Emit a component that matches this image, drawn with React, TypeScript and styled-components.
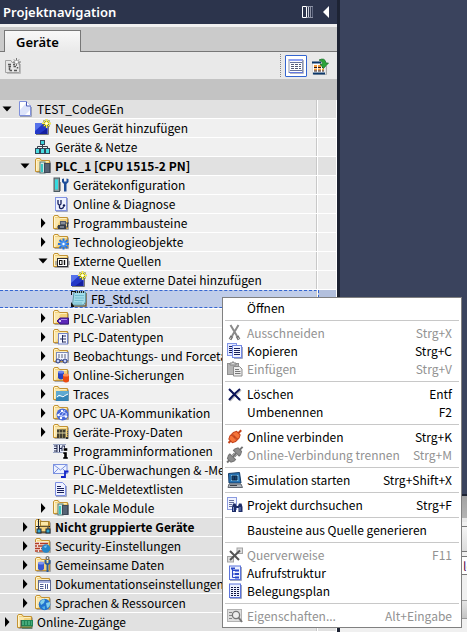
import React from "react";
import styled, { createGlobalStyle, css } from "styled-components";

const GlobalStyle = createGlobalStyle`
  *, *::before, *::after { box-sizing: border-box; }
  html, body { margin: 0; height: 100%; }
  body {
    overflow: hidden;
    font-family: "Noto Sans CJK SC", "Noto Sans", sans-serif;
    font-size: 12px;
    line-height: 18px;
    color: #000;
  }
  button { font: inherit; color: inherit; }
`;

/* ---------- icons ---------- */

const Svg = styled.svg`
  display: block;
  flex: none;
  width: 16px;
  height: 16px;
  overflow: visible;
`;

const Icon = ({ children }: { children: React.ReactNode }) => (
  <Svg viewBox="0 0 16 16" aria-hidden="true">
    {children}
  </Svg>
);

const Folder = ({ children }: { children?: React.ReactNode }) => (
  <Icon>
    <path d="M1.5 14.5H15.5V3.5" fill="none" stroke="#a5a5a5" />
    <path d="M.5 13.5V1.5L1.5 .5H5L6.5 2.5H14.5V13.5Z" fill="#f3d27c" stroke="#c39233" />
    <path d="M1 13V3L8 3L3 13Z" fill="#fae7ae" />
    <path d="M1.5 12.5V2L2 1.5H4.5" fill="none" stroke="#fff5cf" />
    <path d="M7 3.5H13.5" stroke="#fdf0bd" />
    {children}
  </Icon>
);

const PageIcon = () => (
  <Icon>
    <path d="M3 15.5H14.5V6" fill="none" stroke="#9aa0b4" />
    <path d="M2.5 .5H9L13.5 5V14.5H2.5Z" fill="#fff" stroke="#7f90dc" />
    <path d="M3 14V9L9 2H10V5.5H13V9L8 14Z" fill="#dde4fa" />
    <path d="M9.5 .5V5H13.5" fill="#fff" stroke="#4858b8" />
  </Icon>
);

const Sparkle = () => (
  <g>
    <path d="M11.5 -1V8M7 3.500H16M8.500 .5L14.500 6.500M14.500 .5L8.500 6.500" stroke="#8a8a1c" strokeWidth="1.6" />
    <path d="M11.5 -1V8M7 3.500H16M9 1L14 6M14 1L9 6" stroke="#fcf23c" />
    <circle cx="11.500" cy="3.500" r="1.300" fill="#fff" />
  </g>
);

const NewIcon = () => (
  <Icon>
    <path d="M1 14.500H13.500V4" stroke="#777" fill="none" />
    <rect x="0" y="3" width="12.500" height="11" fill="#2338c8" />
    <path d="M0 3H9L0 11Z" fill="#5672ea" />
    <path d="M12.500 8V14H4Z" fill="#1520a0" />
    <Sparkle />
  </Icon>
);

const NetworkIcon = () => (
  <Icon>
    <path d="M7.500 5V8M2.500 11V7.500H12.500V11M7.500 7V11" stroke="#333c48" fill="none" />
    <rect x="5.500" y="1.500" width="4" height="4" fill="#3fd0d8" stroke="#314456" />
    {[1, 6, 11].map((x) => (
      <rect key={x} x={x - 0.5} y="9.500" width="4" height="5" fill="#4adbe0" stroke="#314456" />
    ))}
  </Icon>
);

const RackFolder = () => (
  <Folder>
    <rect x="5" y="4" width="5" height="11" fill="#cfe6e4" stroke="#547a78" strokeWidth="1" />
    <rect x="6" y="6" width="2" height="8" fill="#39c7c2" />
    <rect x="9" y="5" width="6.500" height="10" fill="#3f4958" />
    <rect x="10" y="6" width="4" height="8" fill="#566374" />
  </Folder>
);

const DeviceConfigIcon = () => (
  <Icon>
    <rect x="1" y="1" width="5.500" height="13.500" fill="#8f999b" stroke="#4a5a60" />
    <rect x="2" y="2.500" width="3" height="10" fill="#35dbe0" />
    <path d="M9 2V5L11 7V14.500H13.500V7L15.500 5V2L13.500 1.500V4.500H11V1.500Z" fill="#1d4d98" />
    <path d="M7.500 5V14" stroke="#9a9a9a" />
  </Icon>
);

const DiagnoseIcon = () => (
  <Icon>
    <path d="M3 15.500H14.500V2" stroke="#a0a7c0" fill="none" />
    <rect x="2.500" y="1.500" width="11" height="13" fill="#eef2ff" stroke="#8394e2" />
    <path d="M5 4V7.500Q5 9 6.500 9Q8 9 8 7.500V4M6.500 9V11.500Q7 13 9 12.500Q10.500 12 10.500 10.500" fill="none" stroke="#101a58" strokeWidth="1.300" />
    <circle cx="11" cy="9.500" r="1.200" fill="#101a58" />
  </Icon>
);

const BlocksFolder = () => (
  <Folder>
    <rect x="7" y="6" width="6" height="4" fill="#535b68" />
    <rect x="5" y="10" width="8" height="4" fill="#353d4a" />
    <path d="M4 12H6M13 8H16M13 12H14.500V8" stroke="#353d4a" fill="none" />
    <path d="M8 8H12M7 12H11" stroke="#b7bfca" />
  </Folder>
);

const GearFolder = () => (
  <Folder>
    <path d="M10.500 4.500V15.500M5 10H16M6.500 6L14.500 14M14.500 6L6.500 14" stroke="#2874e0" strokeWidth="2" />
    <circle cx="10.500" cy="10" r="3" fill="#4a93f0" />
    <circle cx="10.500" cy="10" r="1.200" fill="#fff" />
  </Folder>
);

const SourceFolder = () => (
  <Folder>
    <rect x="4.500" y="5.500" width="10" height="8" fill="#fff" stroke="#2c2c34" />
    <path d="M3 8V12M16 8V12" stroke="#70757d" />
    <rect x="6.500" y="7.500" width="2.500" height="4" fill="none" stroke="#111" />
    <path d="M11.500 7V12" stroke="#111" strokeWidth="1.400" />
  </Folder>
);

const ScriptIcon = () => (
  <Icon>
    <path d="M2 15H15V2" stroke="#74623e" fill="none" strokeWidth="1.500" />
    <path d="M3 1H14.500V11L12.500 14H1.500Z" fill="#a2dce9" stroke="#5e9aa8" />
    <path d="M4 4.500H13M4 7H13M3.500 9.500H12.500M3 12H11" stroke="#72bdd0" />
    <path d="M4 1H14" stroke="#222" strokeDasharray="1 1" strokeWidth="2" />
    <path d="M0 16V11L3 15V16ZM0 0H4V1H1V4H0Z" fill="#111" />
  </Icon>
);

const TagsFolder = () => (
  <Folder>
    <path d="M4 11L7 8H15.500V14H7Z" fill="#5b27b8" stroke="#3a1681" />
    <path d="M8 9.500H14" stroke="#a98af0" />
    <circle cx="7" cy="11" r="1" fill="#fff" />
  </Folder>
);

const TypesFolder = () => (
  <Folder>
    <rect x="5.500" y="4.500" width="9" height="10.500" fill="#f4f6ff" stroke="#7484c8" />
    <path d="M9.500 6V13.500M7 10H9.500M9.500 7H13M9.500 10H13M9.500 13H13" stroke="#222a5c" fill="none" />
  </Folder>
);

const WatchFolder = () => (
  <Folder>
    <rect x="3.500" y="4.500" width="11.500" height="8" fill="#f5f7ff" stroke="#7c89b8" />
    <path d="M5 7H14M5 9H14" stroke="#5a637c" strokeDasharray="2 1" />
    <circle cx="5" cy="13" r="2" fill="#c5d1f8" stroke="#26367c" />
    <circle cx="12" cy="13" r="2" fill="#c5d1f8" stroke="#26367c" />
    <path d="M7 12.500Q8.500 11 10 12.500" stroke="#26367c" fill="none" />
  </Folder>
);

const Drum = ({ x, y, fill, light }: { x: number; y: number; fill: string; light: string }) => (
  <g>
    <path d={`M${x} ${y}V${y + 6}Q${x + 3} ${y + 9} ${x + 6} ${y + 6}V${y}Z`} fill={fill} />
    <ellipse cx={x + 3} cy={y} rx="3" ry="1.500" fill={light} />
  </g>
);

const BackupFolder = () => (
  <Folder>
    <Drum x={5} y={5} fill="#2742c0" light="#6f87ee" />
    <Drum x={10} y={8} fill="#ec4b10" light="#ff9257" />
  </Folder>
);

const TraceFolder = () => (
  <Folder>
    <rect x="3" y="5" width="12.500" height="10" fill="#3484b5" />
    <path d="M3 5H15.500V8L3 12Z" fill="#5fa9d0" />
    <path d="M4 11Q6 8 8 10T12 9.500L15 8" fill="none" stroke="#fff" />
  </Folder>
);

const OpcFolder = () => (
  <Folder>
    <circle cx="9.500" cy="9.500" r="6" fill="#4667d8" />
    <path d="M5 10L9 6M7 13L12 5M5 10L13 12M9 6L14 9M7 13L14 9" stroke="#b9c8ff" />
    <g fill="#fff">
      <circle cx="5.500" cy="10" r="1.200" />
      <circle cx="9" cy="6" r="1.200" />
      <circle cx="13" cy="11.500" r="1.200" />
      <circle cx="8" cy="13" r="1.200" />
    </g>
  </Folder>
);

const ProxyFolder = () => (
  <Folder>
    <path d="M4 14V5H13V14" fill="#8c8258" />
    <path d="M5 6V14M8 6V14M11 6V14" stroke="#2f2d28" strokeWidth="1.600" />
    <path d="M4 9H13" stroke="#ddd4a8" />
    <path d="M14.500 7V13" stroke="#555" strokeDasharray="1 1" />
    <rect x="13" y="13" width="2" height="2" fill="#333" />
  </Folder>
);

const ProgInfoIcon = () => (
  <Icon>
    <path d="M0 1.500H13M0 9.500H10" stroke="#98a3c0" />
    <rect x="0" y="2" width="12" height="7" fill="#e7ecfa" />
    <path d="M1 3H4M1 5.500H4M1 8H4M4 2V9M6.500 2V9M6 5.500H9M9 3.500V8M9 3H12M11.500 3V8" stroke="#1e2448" fill="none" />
    <path d="M10.500 5H14.500V8H10.500ZM10 9H14V14H15V16H10V14H11V11H10Z" fill="#000" stroke="#fff" strokeWidth=".4" />
  </Icon>
);

const MailIcon = () => (
  <Icon>
    <rect x=".5" y="2.500" width="13.500" height="9" fill="#edf2ff" stroke="#7b91e0" />
    <path d="M.5 2.500L7.500 8L14 2.500M.5 11.500L5 7M14 11.500L10 7" fill="none" stroke="#7b91e0" />
    <path d="M8 15H12V9.500H15.500" fill="none" stroke="#1425c8" strokeWidth="1.800" />
  </Icon>
);

const TextListIcon = () => (
  <Icon>
    <path d="M3 15.500H13.500V5" stroke="#a0a7c0" fill="none" />
    <path d="M2.500 1.500H9.500L12.500 4.500V14.500H2.500Z" fill="#eef1ff" stroke="#7b8de0" />
    <path d="M4 5.500H8M4 7.500H11M4 9.500H11M4 11.500H11" stroke="#18205c" />
  </Icon>
);

const UngroupedFolder = () => (
  <Folder>
    <path d="M3.500 0V13M1 7.500H15" stroke="#1d2532" />
    <rect x="5.500" y="2.500" width="8" height="4.500" fill="#fbe9a8" stroke="#a8842e" />
    <rect x="2" y="10" width="4" height="4" fill="#34a8d0" stroke="#1d2532" />
    <rect x="11" y="10" width="4" height="4" fill="#34a8d0" stroke="#1d2532" />
    <path d="M4 8V10M13 8V10M6 13H11" stroke="#1d2532" />
  </Folder>
);

const SecurityFolder = () => (
  <Folder>
    <rect x="0" y="4" width="13" height="10" fill="#f3e4dc" />
    <path d="M0 5.500H4M5 5.500H13M0 8H2M3 8H9M10 8H13M0 10.500H5M6 10.500H13M0 13H3M4 13H9" stroke="#b23b25" strokeWidth="1.700" />
    <circle cx="11" cy="10.500" r="4.300" fill="#2585c8" />
    <path d="M8.500 9Q10 7 12 7.500L11 10Z" fill="#7cc4ee" />
  </Folder>
);

const SharedFolder = () => (
  <Folder>
    <Drum x={3} y={6} fill="#3a58d0" light="#8196f0" />
    <path d="M12.500 6.500V15M10.500 3V6L12.500 7.500L14.500 6V3" stroke="#2a5c9a" fill="none" strokeWidth="2" />
    <circle cx="12.500" cy="1" r="1.500" fill="none" stroke="#555" />
  </Folder>
);

const DocsFolder = () => (
  <Folder>
    <rect x="3.500" y="4.500" width="12" height="10" fill="#fff" stroke="#5e6890" />
    <path d="M4 6H15" stroke="#8a96d0" strokeWidth="1.500" />
    <path d="M5 8.500H8.500M5 10.500H8.500M5 12.500H8.500M10.500 8V13M12.500 8V13" stroke="#4d5b90" />
  </Folder>
);

const GlobeFolder = () => (
  <Folder>
    <circle cx="9.500" cy="9.500" r="5.800" fill="#2173cf" />
    <path d="M5 7Q8 3 10 5L9 8L6 10ZM11 8L15 7Q15.500 12 12 13Z" fill="#84cfe8" />
    <path d="M7 12L10 11L10 14.500Q8 14.500 7 12" fill="#52aee0" />
  </Folder>
);

const AccessFolder = () => (
  <Folder>
    <rect x="4" y="6" width="12" height="6.500" fill="#1f8455" />
    <path d="M5 8H15M5 10H15" stroke="#6ad0a0" strokeDasharray="2 1" />
    <path d="M6 12.500V15M8 12.500V15M10 12.500V15M12 12.500V15M14 12.500V15" stroke="#1b5c3e" />
    <path d="M4 14V6" stroke="#444" />
  </Folder>
);

const CutIcon = () => (
  <Icon>
    <path d="M3.500 0L10 11M11.500 0L5 11" stroke="#8a8a8a" strokeWidth="2" />
    <path d="M5 11L3 14.500M10 11L12 14.500" stroke="#6f6f6f" strokeWidth="3" />
    <path d="M4 12.500L3 14M11 12.500L12 14" stroke="#ddd" />
  </Icon>
);

const CopyIcon = () => (
  <Icon>
    <rect x=".5" y=".5" width="9" height="12" fill="#e3e9ff" stroke="#8195e8" />
    <path d="M2 3.500H6M2 5.500H6M2 7.500H6M2 9.500H6" stroke="#18205c" />
    <path d="M7 15.500H15.500V4" stroke="#a0a7c0" fill="none" />
    <rect x="5.500" y="2.500" width="9" height="12" fill="#f2f5ff" stroke="#7388e4" />
    <path d="M7 5.500H13M7 7.500H13M7 9.500H13M7 11.500H13" stroke="#18205c" />
  </Icon>
);

const PasteIcon = () => (
  <Icon>
    <rect x=".5" y="2.500" width="11" height="11" fill="#b5b5b5" stroke="#919191" />
    <path d="M3 4V2H5L6 .5L7 2H9V4Z" fill="#d8d8d8" stroke="#858585" />
    <path d="M6.500 5.500H12.500L15 8V15H6.500Z" fill="#ececec" stroke="#8c8c8c" />
    <path d="M8 8.500H12M8 10.500H13.500M8 12.500H13.500" stroke="#777" />
  </Icon>
);

const DeleteIcon = () => (
  <Icon>
    <path d="M3 4L14 15M14 4L3 15" stroke="#bbb" strokeWidth="1.500" />
    <path d="M2 3Q5 6 13 14M13 3Q8 7 2 14" stroke="#0b1458" strokeWidth="2" fill="none" />
  </Icon>
);

const Plug = ({ a, b, gap }: { a: string; b: string; gap: number }) => (
  <Icon>
    <g transform="rotate(-45 7.500 8)">
      <path d={`M${-1 - gap} 8H${17 + gap}`} stroke={b} strokeWidth="2" />
      <path d={`M${7 - gap} 4H${5 - gap}L${2 - gap} 5.500V10.500L${5 - gap} 12H${7 - gap}Z`} fill={a} stroke={b} />
      <path d={`M${8 + gap} 4H${10 + gap}L${13 + gap} 5.500V10.500L${10 + gap} 12H${8 + gap}Z`} fill={a} stroke={b} />
      {gap > 0 && <path d="M6 6.500H9M6 9.500H9" stroke={b} />}
    </g>
  </Icon>
);

const SimIcon = () => (
  <Icon>
    <path d="M2 11L1.500 1.500L12.500 .5L14 11Z" fill="#2773b4" stroke="#173c66" />
    <rect x="4" y="3" width="7.500" height="6" fill="#7ab9e0" />
    <path d="M5 4H10V8H5ZM7.500 4V8" fill="#18406c" stroke="#0d2848" />
    <path d="M2 12H14L15.500 15.500H1Z" fill="#b0b4ba" stroke="#62676f" />
    <path d="M3 13.500H10" stroke="#3a3f48" />
  </Icon>
);

const Binoculars = () => (
  <Icon>
    <rect x=".5" y=".5" width="9" height="12" fill="#f0f3ff" stroke="#8b9be0" />
    <path d="M2 3.500H7M2 5.500H7M2 7.500H5M2 9.500H5" stroke="#67709c" />
    <path d="M6 6.500H8.500L9.500 9H11L12 6.500H14.500L15.500 10V15H11.500V11H9V15H5V10Z" fill="#1e2d68" />
    <path d="M6.500 10V14M13 10V14" stroke="#7f92cc" />
  </Icon>
);

const XrefIcon = () => (
  <Icon>
    <rect x="10" y="1" width="5.500" height="5.500" fill="#ddd" stroke="#a3a3a3" />
    <rect x=".5" y="9.500" width="6" height="5.500" fill="#ddd" stroke="#a3a3a3" />
    <path d="M3 4L12 13M13 3.500L3 13" stroke="#555" strokeWidth="2" />
  </Icon>
);

const CallIcon = () => (
  <Icon>
    <path d="M3 15.500H14.500V2" stroke="#a0a7c0" fill="none" />
    <rect x="2.500" y="1" width="11" height="13.500" fill="#edf1ff" stroke="#5c74dc" />
    <path d="M5.500 3V12.500H8M5.500 5.500H8M5.500 9H8" stroke="#2846c8" fill="none" />
    <path d="M8 5.500H12M8 9H12M8 12.500H12M4 3.500H8" stroke="#2846c8" strokeWidth="1.800" />
  </Icon>
);

const PlanIcon = () => (
  <Icon>
    <path d="M3 15.500H14.500V2" stroke="#a0a7c0" fill="none" />
    <rect x="2.500" y="1" width="11" height="13.500" fill="#edf1ff" stroke="#5c74dc" />
    <path d="M4 4.500H12M4 6.500H12M4 8.500H12M4 10.500H12M4 12.500H12" stroke="#111742" strokeDasharray="2 1" />
  </Icon>
);

const PropsIcon = () => (
  <Icon>
    <rect x=".5" y="1.500" width="14" height="12" fill="#dedede" stroke="#b2b2b2" />
    <path d="M2 4.500H5M2 7.500H5M2 10.500H5" stroke="#858585" />
    <circle cx="9" cy="7" r="3.600" fill="#eee" stroke="#777" strokeWidth="1.300" />
    <path d="M11.500 9.500L15 14" stroke="#777" strokeWidth="2" />
  </Icon>
);

const ToolNewIcon = () => (
  <Icon>
    <path d="M2 15.500H15.500V6" stroke="#bbb" fill="none" />
    <path d="M.5 14.500V2.500H6L7 4.500H14.500V14.500Z" fill="#e6e6e6" stroke="#a2a2a2" />
    <path d="M3 6.500H6M8 6.500H10M4.500 9.500V12M3.500 8.500H6M4.500 12.500H7M8.500 8.500H11M9 12.500H12M12.500 9V10.500" stroke="#555" strokeWidth="1.500" fill="none" />
    <path d="M11.500 0V8M8 4H16M9 1.500L14 6.500M14 1.500L9 6.500" stroke="#777" />
    <circle cx="11.500" cy="4" r="1.500" fill="#fff" />
  </Icon>
);

const ListViewIcon = () => (
  <Icon>
    <path d="M2 15.500H15.500V2" stroke="#b4b8c8" fill="none" />
    <rect x="1" y="1.500" width="13.500" height="13" fill="#fff" stroke="#8d96ae" />
    <path d="M1 2H14.500" stroke="#8fa2f2" strokeWidth="2" />
    <path d="M2 4.500H14M2 12.500H14" stroke="#68739a" />
    <path d="M3 6.500H13M3 8.500H13M3 10.500H13" stroke="#545c78" strokeDasharray="3 1" />
    <path d="M1 14.500H15" stroke="#6378e0" />
  </Icon>
);

const ExportIcon = () => (
  <Icon>
    <path d="M2 16.500H14.500V8" stroke="#aaa" fill="none" />
    <rect x=".5" y="4" width="12.500" height="12" fill="#fff" stroke="#d7d7d7" />
    <path d="M0 4.500H9M1 15.500H13" stroke="#0b3668" strokeWidth="2" />
    <path d="M2 8H5M6 8H9M10 8H12M2 11.500H5M6 11.500H9M10 11.500H12" stroke="#f29a38" strokeWidth="2" />
    <path d="M2 9.500H5M6 9.500H9M10 9.500H12M2 13H5M6 13H9M10 13H12" stroke="#301818" />
    <path d="M7 2Q13 -1 14 5H16.500L11.500 10.500L8 6H10.500Q10.500 3 7 2Z" fill="#2ca438" stroke="#176c28" strokeWidth=".7" />
  </Icon>
);

/* ---------- layout ---------- */

const Shell = styled.div`
  position: relative;
  display: flex;
  min-height: 100vh;
  height: 100%;
  overflow: hidden;
  background: #3a435d;
`;

const Panel = styled.aside`
  flex: none;
  width: 340px;
  border-right: 3px solid #1d2333;
  background: #f0f0f0;
`;

const TitleBar = styled.header`
  display: flex;
  align-items: center;
  gap: 10px;
  height: 24px;
  padding: 0 8px 0 3px;
  background: #2c344c;
  color: #fff;
`;

const Title = styled.h1`
  flex: 1;
  margin: 0;
  font-family: "Noto Sans", sans-serif;
  font-size: 13px;
  line-height: 24px;
  font-weight: 600;
`;

const PlainButton = styled.button`
  display: flex;
  padding: 0;
  border: 0;
  background: none;
`;

const Glyph = styled.svg<{ $w: number }>`
  display: block;
  width: ${(p) => p.$w}px;
  height: 12px;
`;

const TabStrip = styled.div`
  display: flex;
  align-items: flex-end;
  height: 28px;
  border-top: 3px solid #f0f0f0;
  background: #cbcbcb;
  box-shadow: inset 0 -1px #777;
  padding-left: 4px;
`;

const Tab = styled.button`
  height: 22px;
  min-width: 77px;
  padding: 0 20px 0 11px;
  border: 1px solid #777;
  border-bottom: 0;
  background: linear-gradient(#f8f8f8, #e9e9e9);
  font-family: "Noto Sans", sans-serif;
  font-weight: 600;
  font-size: 13px;
  line-height: 18px;
  text-align: left;
`;

const Toolbar = styled.div`
  display: flex;
  align-items: center;
  height: 27px;
  padding: 0 9px 0 5px;
  background: #e9e9e9;
`;

const Spacer = styled.div`
  flex: 1;
`;

const Grip = styled.div`
  height: 23px;
  margin-right: 4px;
  border-left: 1px dotted #888;
`;

const ToolButton = styled.button<{ $active?: boolean }>`
  display: grid;
  place-items: center;
  width: ${(p) => (p.$active ? 22 : 16)}px;
  height: 22px;
  margin-right: ${(p) => (p.$active ? 5 : 0)}px;
  padding: 0;
  border: ${(p) => (p.$active ? "1px solid #3465d0" : "0")};
  border-radius: 1px;
  background: ${(p) => (p.$active ? "#fff" : "none")};
`;

const TreeHeader = styled.div`
  height: 21px;
  background: #c3c3c3;
`;

const Tree = styled.ul`
  margin: 0;
  padding: 0;
  list-style: none;
`;

const Row = styled.li<{ $dark?: boolean; $selected?: boolean }>`
  display: grid;
  grid-template-columns: minmax(0, 1fr) 18px;
  column-gap: 1px;
  height: 19px;
  padding-right: 1px;
  border-bottom: 1px solid #fff;
  background: #fff;
  > * {
    background: ${(p) => (p.$dark ? "#e1e1e1" : "#f0f0f0")};
  }
  ${(p) =>
    p.$selected &&
    css`
      > :first-child {
        background: #c0cde9;
        border-top: 1px dashed #3465d0;
        border-bottom: 1px dashed #3465d0;
      }
      > :last-child {
        background: #b3c0dd;
        border-left: 1px dashed #3465d0;
      }
    `}
`;

const RowMain = styled.div<{ $level: number; $strong?: boolean }>`
  display: flex;
  align-items: center;
  padding-left: ${(p) => p.$level * 18}px;
  border-right: 1px solid #c8c8c8;
  font-weight: ${(p) => (p.$strong ? 700 : 400)};
  overflow: hidden;
`;

const RowStatus = styled.div``;

const Twisty = styled.span`
  flex: none;
  width: 14px;
  margin-right: 3px;
  svg {
    width: 14px;
  }
`;

const RowLabel = styled.span`
  margin-left: 4px;
  white-space: nowrap;
`;

const Work = styled.main`
  flex: 1;
  display: flex;
  flex-direction: column;
  min-width: 0;
`;

const Canvas = styled.div`
  flex: 1;
`;

const Inspector = styled.section`
  display: flex;
  flex-direction: column;
  border-top: 2px solid #1d2333;
  background: #f0f0f0;
`;

const InspectorTitle = styled.div`
  height: 26px;
  border-bottom: 4px solid #e8e8e8;
  background: linear-gradient(#a2a2a2, #b4b4b4);
`;

const InspectorTabs = styled.div`
  height: 26px;
  margin-top: 4px;
  border-top: 1px solid #777;
  border-bottom: 1px solid #777;
  background: linear-gradient(#f4f4f4, #dcdcdc);
`;

const InspectorField = styled.div`
  height: 19px;
  margin-top: 4px;
  padding-left: 123px;
  border: solid #777;
  border-width: 1px 0;
  background: #fff;
  color: #5c1050;
  line-height: 17px;
  white-space: nowrap;
  overflow: hidden;
`;

const InspectorBody = styled.div`
  height: 25px;
`;

const InspectorHead = styled.div`
  height: 19px;
  margin-bottom: 13px;
  border: solid #999;
  border-width: 1px 0;
  background: linear-gradient(#e4e4e4, #c4c4c4);
`;

const Menu = styled.div`
  position: absolute;
  left: 222px;
  top: 297px;
  width: 240px;
  padding: 1px 2px 2px;
  border: 1px solid #808080;
  background: #fff;
`;

const MenuItem = styled.button`
  display: grid;
  grid-template-columns: 16px minmax(0, 1fr) auto;
  column-gap: 4px;
  align-items: center;
  width: 100%;
  height: 18px;
  padding: 0 7px 0 2px;
  border: 0;
  background: none;
  text-align: left;
  line-height: 18px;
  white-space: nowrap;
  &:disabled {
    color: #929292;
  }
  &:not(:disabled):hover {
    background: #c0cde9;
  }
`;

const Divider = styled.hr`
  height: 1px;
  margin: 3px 0;
  border: 0;
  background: #c8c8c8;
`;

/* ---------- data ---------- */

type Node = {
  label: string;
  level: number;
  icon: React.ReactNode;
  open?: boolean;
  dark?: boolean;
  strong?: boolean;
  selected?: boolean;
};

const nodes: Node[] = [
  { label: "TEST_CodeGEn", level: 0, icon: <PageIcon />, open: true, dark: true },
  { label: "Neues Gerät hinzufügen", level: 1, icon: <NewIcon /> },
  { label: "Geräte & Netze", level: 1, icon: <NetworkIcon /> },
  { label: "PLC_1 [CPU 1515-2 PN]", level: 1, icon: <RackFolder />, open: true, dark: true, strong: true },
  { label: "Gerätekonfiguration", level: 2, icon: <DeviceConfigIcon /> },
  { label: "Online & Diagnose", level: 2, icon: <DiagnoseIcon /> },
  { label: "Programmbausteine", level: 2, icon: <BlocksFolder />, open: false },
  { label: "Technologieobjekte", level: 2, icon: <GearFolder />, open: false },
  { label: "Externe Quellen", level: 2, icon: <SourceFolder />, open: true },
  { label: "Neue externe Datei hinzufügen", level: 3, icon: <NewIcon /> },
  { label: "FB_Std.scl", level: 3, icon: <ScriptIcon />, selected: true },
  { label: "PLC-Variablen", level: 2, icon: <TagsFolder />, open: false },
  { label: "PLC-Datentypen", level: 2, icon: <TypesFolder />, open: false },
  { label: "Beobachtungs- und Forcetabellen", level: 2, icon: <WatchFolder />, open: false },
  { label: "Online-Sicherungen", level: 2, icon: <BackupFolder />, open: false },
  { label: "Traces", level: 2, icon: <TraceFolder />, open: false },
  { label: "OPC UA-Kommunikation", level: 2, icon: <OpcFolder />, open: false },
  { label: "Geräte-Proxy-Daten", level: 2, icon: <ProxyFolder />, open: false },
  { label: "Programminformationen", level: 2, icon: <ProgInfoIcon /> },
  { label: "PLC-Überwachungen & -Meldungen", level: 2, icon: <MailIcon /> },
  { label: "PLC-Meldetextlisten", level: 2, icon: <TextListIcon /> },
  { label: "Lokale Module", level: 2, icon: <RackFolder />, open: false },
  { label: "Nicht gruppierte Geräte", level: 1, icon: <UngroupedFolder />, open: false, dark: true, strong: true },
  { label: "Security-Einstellungen", level: 1, icon: <SecurityFolder />, open: false, dark: true },
  { label: "Gemeinsame Daten", level: 1, icon: <SharedFolder />, open: false, dark: true },
  { label: "Dokumentationseinstellungen", level: 1, icon: <DocsFolder />, open: false, dark: true },
  { label: "Sprachen & Ressourcen", level: 1, icon: <GlobeFolder />, open: false, dark: true },
  { label: "Online-Zugänge", level: 0, icon: <AccessFolder />, open: false, dark: true },
];

type Command = { label: string; keys?: string; icon?: React.ReactNode; off?: boolean };

const menuGroups: Command[][] = [
  [{ label: "Öffnen" }],
  [
    { label: "Ausschneiden", keys: "Strg+X", icon: <CutIcon />, off: true },
    { label: "Kopieren", keys: "Strg+C", icon: <CopyIcon /> },
    { label: "Einfügen", keys: "Strg+V", icon: <PasteIcon />, off: true },
  ],
  [
    { label: "Löschen", keys: "Entf", icon: <DeleteIcon /> },
    { label: "Umbenennen", keys: "F2" },
  ],
  [
    { label: "Online verbinden", keys: "Strg+K", icon: <Plug a="#f5743a" b="#c4421a" gap={0} /> },
    { label: "Online-Verbindung trennen", keys: "Strg+M", icon: <Plug a="#8e8e8e" b="#747474" gap={2} />, off: true },
  ],
  [{ label: "Simulation starten", keys: "Strg+Shift+X", icon: <SimIcon /> }],
  [{ label: "Projekt durchsuchen", keys: "Strg+F", icon: <Binoculars /> }],
  [{ label: "Bausteine aus Quelle generieren" }],
  [
    { label: "Querverweise", keys: "F11", icon: <XrefIcon />, off: true },
    { label: "Aufrufstruktur", icon: <CallIcon /> },
    { label: "Belegungsplan", icon: <PlanIcon /> },
  ],
  [{ label: "Eigenschaften...", keys: "Alt+Eingabe", icon: <PropsIcon />, off: true }],
];

const TreeRow = ({ node }: { node: Node }) => (
  <Row
    role="treeitem"
    aria-level={node.level + 1}
    aria-expanded={node.open}
    aria-selected={!!node.selected}
    $dark={node.dark}
    $selected={node.selected}
  >
    <RowMain $level={node.level} $strong={node.strong}>
      <Twisty>
        {node.open !== undefined && (
          <Svg viewBox="0 0 14 16" aria-hidden="true">
            <path d={node.open ? "M2.500 5.500H11.500L7 10.500Z" : "M5 3L9.500 8L5 13Z"} />
          </Svg>
        )}
      </Twisty>
      {node.icon}
      <RowLabel>{node.label}</RowLabel>
    </RowMain>
    <RowStatus />
  </Row>
);

export default function App() {
  return (
    <>
      <GlobalStyle />
      <Shell>
        <Panel>
          <TitleBar>
            <Title>Projektnavigation</Title>
            <PlainButton aria-label="Spalten">
              <Glyph $w={11} viewBox="0 0 11 12">
                <path d="M.5 .5H4.500V11.500H.5Z" fill="none" stroke="#fff" />
                <path d="M5 .5H11M5 11.500H11" stroke="#8d93a5" />
                <path d="M6.500 1V11" stroke="#c9ccd6" />
                <path d="M8.500 1V11" stroke="#8d93a5" />
                <path d="M10.500 1V11" stroke="#626a82" />
              </Glyph>
            </PlainButton>
            <PlainButton aria-label="Einklappen">
              <Glyph $w={6} viewBox="0 0 6 12">
                <path d="M6 0V12L0 6Z" fill="#fff" />
              </Glyph>
            </PlainButton>
          </TitleBar>
          <TabStrip role="tablist">
            <Tab role="tab" aria-selected>
              Geräte
            </Tab>
          </TabStrip>
          <Toolbar>
            <ToolButton aria-label="Neue Gruppe">
              <ToolNewIcon />
            </ToolButton>
            <Spacer />
            <Grip />
            <ToolButton $active aria-label="Detailansicht">
              <ListViewIcon />
            </ToolButton>
            <ToolButton aria-label="Übersicht öffnen">
              <ExportIcon />
            </ToolButton>
          </Toolbar>
          <TreeHeader />
          <Tree role="tree">
            {nodes.map((n) => (
              <TreeRow key={n.label} node={n} />
            ))}
          </Tree>
        </Panel>
        <Work>
          <Canvas />
          <Inspector>
            <InspectorTitle />
            <InspectorTabs />
            <InspectorField>le</InspectorField>
            <InspectorBody />
            <InspectorHead />
          </Inspector>
        </Work>
        <Menu role="menu">
          {menuGroups.map((group, i) => (
            <React.Fragment key={i}>
              {i > 0 && <Divider />}
              {group.map((c) => (
                <MenuItem key={c.label} role="menuitem" disabled={c.off}>
                  <span>{c.icon}</span>
                  <span>{c.label}</span>
                  <span>{c.keys}</span>
                </MenuItem>
              ))}
            </React.Fragment>
          ))}
        </Menu>
      </Shell>
    </>
  );
}
